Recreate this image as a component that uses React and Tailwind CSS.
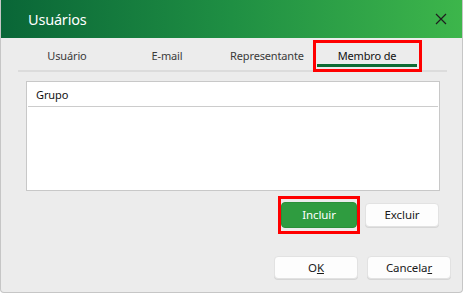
import React from "react";

const tabs = ["Usuário", "E-mail", "Representante", "Membro de"];

function Button({ children, primary, className = "" }) {
  return (
    <button
      className={`flex items-center justify-center rounded-[4px] text-[11.5px] tracking-[-0.1px] leading-none ${
        primary
          ? "bg-[#2f9c40] text-white border border-[#2a9039]"
          : "bg-[#fdfdfd] text-[#1a1a1a] border border-[#e2e2e2] shadow-[0_1px_0_#d6d6d6]"
      } ${className}`}
    >
      {children}
    </button>
  );
}

export default function App() {
  return (
    <div className="w-[465px] h-[293px] bg-white font-['Noto_Sans','Open_Sans',sans-serif]">
      <div className="w-[463px] h-[293px] flex flex-col bg-[#ececec] border-x border-b border-[#c6c6c6] rounded-b-[4px] overflow-hidden">
        {/* Title bar */}
        <div className="h-[38px] shrink-0 -mx-px flex items-center justify-between pl-[28px] pr-[16px] bg-gradient-to-r from-[#096637] via-[#1f8f43] to-[#3db64b]">
          <span className="text-white text-[14.5px] tracking-[-0.2px] leading-none pt-[1px]">Usuários</span>
          <svg width="12" height="12" viewBox="0 0 12 12" className="text-[#1e1e1e]">
            <path d="M1 1L11 11M11 1L1 11" stroke="currentColor" strokeWidth="1.2" />
          </svg>
        </div>

        {/* Tabs */}
        <div className="h-[32px] flex pl-[16px]">
          {tabs.map((t, i) => {
            const active = i === tabs.length - 1;
            return (
              <div key={t} className="relative w-[100px] flex flex-col items-center justify-end pb-[3px]">
                <span
                  className={`text-[11px] tracking-[-0.15px] leading-[14px] mb-[1px] ${
                    active ? "text-[#111]" : "text-[#3a3a3a]"
                  }`}
                >
                  {t}
                </span>
                <div className={`h-[3px] w-full ${active ? "bg-[#0e6b33]" : ""}`} />
                {active && (
                  <div className="absolute left-[-4px] right-[-5px] top-[2px] bottom-[-2px] border-[3px] border-[#ff0000]" />
                )}
              </div>
            );
          })}
        </div>
        <div className="h-[2px] ml-[17px] mr-[15px] bg-[#dcdcdc]" />

        {/* List */}
        <div className="mt-[9px] ml-[25px] w-[414px] h-[110px] bg-white border border-[#c8c8c8]">
          <div className="h-[25px] mx-px flex items-center pl-[8px] pt-[3px] border-b border-[#cccccc] text-[11px] tracking-[-0.1px] text-[#111]">
            Grupo
          </div>
        </div>

        {/* Incluir / Excluir */}
        <div className="mt-[11px] flex items-center justify-end gap-[8px] pr-[23px]">
          <div className="relative">
            <Button primary className="w-[76px] h-[26px]">Incluir</Button>
            <div className="absolute -left-[3px] -right-[3px] -top-[6px] -bottom-[6px] border-[3px] border-[#ff0000]" />
          </div>
          <Button className="w-[74px] h-[24px]">Excluir</Button>
        </div>

        {/* OK / Cancelar */}
        <div className="mt-[28px] flex items-center justify-end gap-[9px] pr-[11px]">
          <Button className="w-[84px] h-[23px]">
            O<u>K</u>
          </Button>
          <Button className="w-[84px] h-[23px]">
            Cancela<u>r</u>
          </Button>
        </div>
      </div>
    </div>
  );
}
